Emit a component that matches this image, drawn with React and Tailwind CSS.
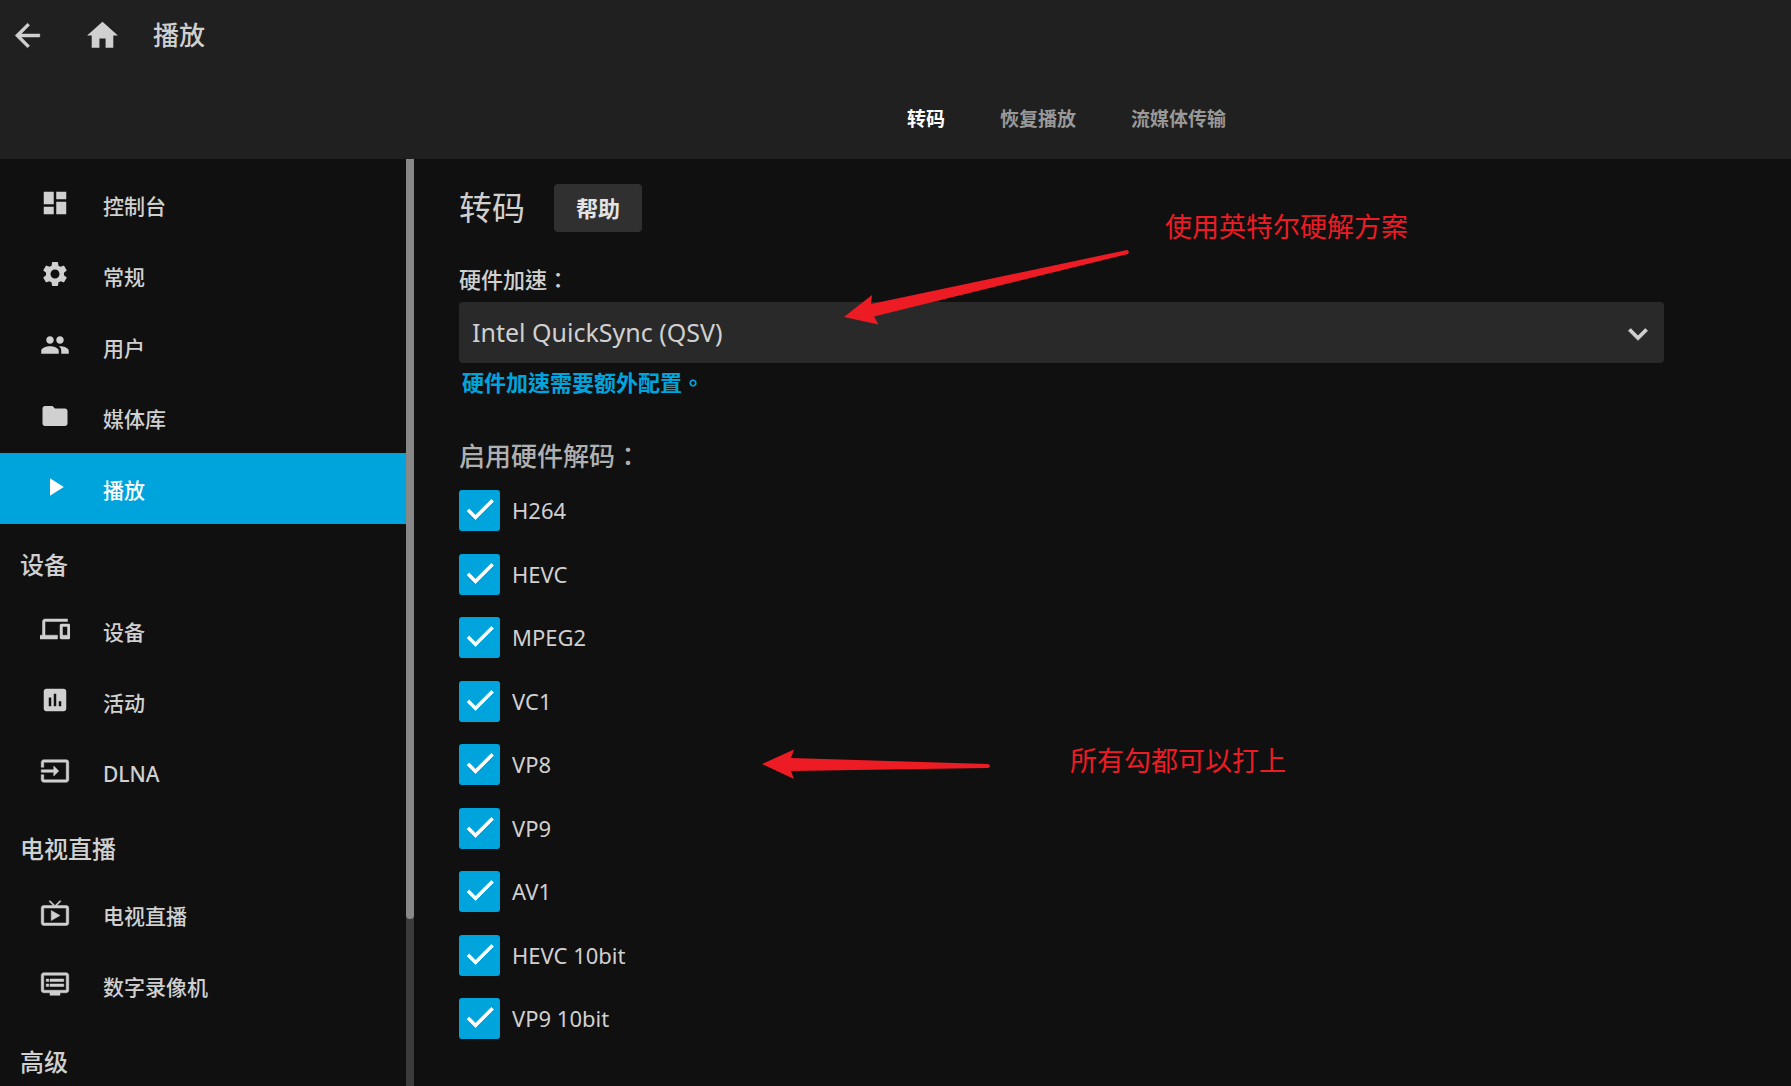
import { useState } from 'react';
import {
  MdArrowBack,
  MdAssessment,
  MdCheck,
  MdDashboard,
  MdDevices,
  MdDvr,
  MdExpandMore,
  MdFolder,
  MdHome,
  MdInput,
  MdLiveTv,
  MdPeople,
  MdPlayArrow,
  MdSettings,
} from 'react-icons/md';

const menu = [
  {
    items: [
      { label: '控制台', icon: MdDashboard },
      { label: '常规', icon: MdSettings },
      { label: '用户', icon: MdPeople },
      { label: '媒体库', icon: MdFolder },
      { label: '播放', icon: MdPlayArrow, active: true },
    ],
  },
  {
    title: '设备',
    items: [
      { label: '设备', icon: MdDevices, outlined: true },
      { label: '活动', icon: MdAssessment },
      { label: 'DLNA', icon: MdInput, outlined: true },
    ],
  },
  {
    title: '电视直播',
    items: [
      { label: '电视直播', icon: MdLiveTv, outlined: true },
      { label: '数字录像机', icon: MdDvr, outlined: true },
    ],
  },
  { title: '高级', items: [] },
];

const tabs = ['转码', '恢复播放', '流媒体传输'];

const codecs = ['H264', 'HEVC', 'MPEG2', 'VC1', 'VP8', 'VP9', 'AV1', 'HEVC 10bit', 'VP9 10bit'];

function Header() {
  const [tab, setTab] = useState('转码');

  return (
    <header className="shrink-0 h-[159px] bg-[#202020]">
      <div className="flex items-center h-[70px] pl-[9px]">
        <button aria-label="返回">
          <MdArrowBack strokeWidth="0.3" className="w-[37px] h-[37px]" />
        </button>
        <button aria-label="主页" className="ml-[38px]">
          <MdHome className="w-[37px] h-[37px]" />
        </button>
        <h1 className="ml-8 text-[26px] font-medium">播放</h1>
      </div>
      <nav className="flex items-center justify-center h-[98px] gap-[55px] pl-[342px]">
        {tabs.map((name) => (
          <button
            key={name}
            onClick={() => setTab(name)}
            className={`text-[19px] leading-7 font-bold ${tab === name ? 'text-white' : 'text-[#999999]'}`}
          >
            {name}
          </button>
        ))}
      </nav>
    </header>
  );
}

function Sidebar() {
  return (
    <aside className="flex shrink-0 w-[414px] overflow-hidden">
      <nav className="flex-1 pt-2.5">
        {menu.map((section, i) => (
          <div key={i}>
            {section.title && (
              <h2 className="flex items-center h-[71px] pl-5 pt-2.5 text-2xl font-medium">{section.title}</h2>
            )}
            {section.items.map(({ label, icon: Icon, active, outlined }) => (
              <a
                key={label}
                href="#"
                className={`flex items-center h-[71px] pl-10 text-[21px] font-medium ${
                  active ? 'bg-[#00a4dc] text-white' : ''
                }`}
              >
                <Icon strokeWidth={outlined ? 0.4 : 0} className="w-[30px] h-[30px] mb-1" />
                <span className="ml-[33px] mt-1">{label}</span>
              </a>
            ))}
          </div>
        ))}
      </nav>
      <div className="w-2 bg-[#3b3b3b]">
        <div className="h-[82%] rounded-b-sm bg-[#888888]" />
      </div>
    </aside>
  );
}

function CodecCheckbox({ name }) {
  const [checked, setChecked] = useState(true);

  return (
    <label className="flex items-start gap-3 h-[63px] odd:h-16">
      <span className="grid place-items-center">
        <input
          type="checkbox"
          checked={checked}
          onChange={(e) => setChecked(e.target.checked)}
          className="col-start-1 row-start-1 appearance-none w-[41px] h-[41px] rounded-[3px] border-2 border-[#888888] checked:border-[#00a4dc] checked:bg-[#00a4dc]"
        />
        {checked && (
          <MdCheck
            strokeWidth="0.5"
            className="col-start-1 row-start-1 w-9 h-9 mb-1 text-white pointer-events-none"
          />
        )}
      </span>
      <span className="text-[22px] leading-[41px]">{name}</span>
    </label>
  );
}

function Annotations() {
  return (
    <div className="absolute inset-0 pointer-events-none text-[27px] leading-8 text-[#ed1c24]">
      <svg className="absolute left-[430px] top-[90px]" width="288" height="77" fill="currentColor">
        <path d="M0 68 L28 46 L27 55 L283 1 Q286 2 284 5 L30 67.500 L34.500 75.500 Z" />
      </svg>
      <p className="absolute left-[751px] top-[52px]">使用英特尔硬解方案</p>
      <svg className="absolute left-[348px] top-[590px]" width="230" height="31" fill="currentColor">
        <path d="M0 15 L32 0.500 L29 9 L226 15 Q230 17 226 19 L29 22 L32 30 Z" />
      </svg>
      <p className="absolute left-[656px] top-[586px]">所有勾都可以打上</p>
    </div>
  );
}

export default function App() {
  return (
    <div className="flex flex-col h-screen overflow-hidden bg-[#101010] text-[#d0d0d0] font-['Noto_Sans','Noto_Sans_CJK_TC',sans-serif] [&_path[fill=none]]:stroke-none">
      <Header />
      <div className="flex flex-1 min-h-0">
        <Sidebar />
        <main className="relative flex-1 min-w-0 overflow-hidden pl-[45px] pr-[127px] pt-[25px]">
          <div className="flex items-center gap-[29px]">
            <h2 className="text-[33px] leading-[48px]">转码</h2>
            <a
              href="#"
              className="px-[22px] rounded bg-[#303030] text-[22px] leading-[48px] font-bold text-[#e4e4e4]"
            >
              帮助
            </a>
          </div>

          <div className="mt-[31px]">
            <label htmlFor="hwaccel" className="block text-[22px] leading-8 font-medium">
              硬件加速：
            </label>
            <div className="grid items-center mt-[7px]">
              <select
                id="hwaccel"
                className="col-start-1 row-start-1 appearance-none w-full h-[61px] pl-[13px] rounded bg-[#292929] text-[25px]"
              >
                <option>Intel QuickSync (QSV)</option>
              </select>
              <MdExpandMore
                strokeWidth="0.5"
                className="col-start-1 row-start-1 justify-self-end w-[38px] h-[38px] mr-[7px] mt-0.5 pointer-events-none"
              />
            </div>
            <a href="#" className="inline-block mt-[3px] pl-[3px] text-[22px] leading-8 font-bold text-[#00a4dc]">
              硬件加速需要额外配置。
            </a>
          </div>

          <h3 className="mt-10 mb-4 text-[26px] leading-9 font-medium text-[#b0b0b0]">启用硬件解码：</h3>
          <div>
            {codecs.map((name) => (
              <CodecCheckbox key={name} name={name} />
            ))}
          </div>

          <Annotations />
        </main>
      </div>
    </div>
  );
}
